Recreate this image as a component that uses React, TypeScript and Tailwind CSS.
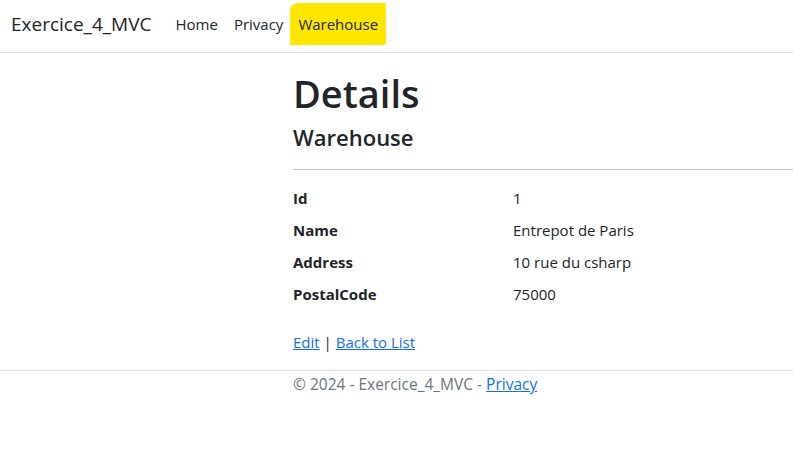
import React from 'react';

const fields = [
  { label: 'Id', value: '1' },
  { label: 'Name', value: 'Entrepot de Paris' },
  { label: 'Address', value: '10 rue du csharp' },
  { label: 'PostalCode', value: '75000' },
];

const App: React.FC = () => {
  return (
    <div className="min-h-[460px] bg-white text-[#212529] font-['Open_Sans',sans-serif] text-[15px]">
      {/* Navbar */}
      <header className="h-[53px] border-b border-[#dee2e6] flex items-center pl-[11px] pb-[4px]">
        <span className="text-[19px] mr-[16px]">Exercice_4_MVC</span>
        <nav className="flex items-center">
          <a className="px-[8px]">Home</a>
          <a className="px-[8px]">Privacy</a>
          <a className="px-[8px] h-[42px] ml-[-1px] flex items-center bg-[#ffe600] rounded-tl-[8px] rounded-br-[2px]">Warehouse</a>
        </nav>
      </header>

      {/* Main */}
      <main className="pl-[293px] pt-[17px]">
        <h1 className="text-[38px] font-semibold leading-[1.25]">Details</h1>
        <h4 className="text-[22px] font-semibold leading-[1.2] mt-[6px]">Warehouse</h4>
        <hr className="mt-[19px] mb-[16px] border-t border-[#c4c4c4]" />
        <dl className="grid grid-cols-[220px_1fr] gap-y-[8px] leading-[24px]">
          {fields.map((f) => (
            <React.Fragment key={f.label}>
              <dt className="font-bold">{f.label}</dt>
              <dd>{f.value}</dd>
            </React.Fragment>
          ))}
        </dl>
        <div className="mt-[24px] leading-[24px]">
          <a className="text-[#0d6efd] underline">Edit</a> | <a className="text-[#0d6efd] underline">Back to List</a>
        </div>
      </main>

      {/* Footer */}
      <footer className="mt-[16px] border-t border-[#dee2e6] pl-[293px] text-[#6c757d] text-[15.5px] leading-[24px] pt-[1px]">
        © 2024 - Exercice_4_MVC - <a className="text-[#0d6efd] underline">Privacy</a>
      </footer>
    </div>
  );
};

export default App;
